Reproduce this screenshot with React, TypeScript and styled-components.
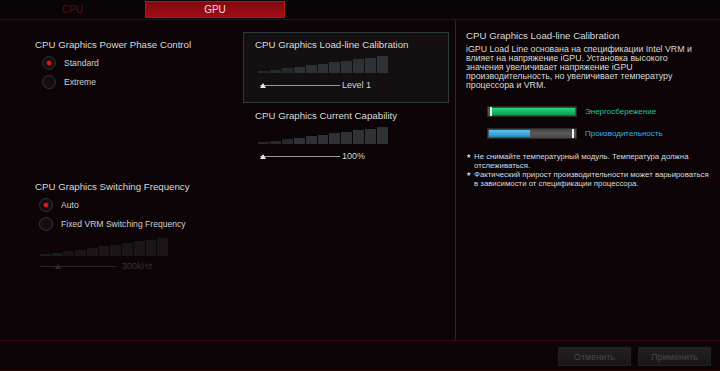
import React from "react";
import styled, { createGlobalStyle, css } from "styled-components";

const Global = createGlobalStyle`
  html, body { margin: 0; padding: 0; background: #0c0406; }
  * { box-sizing: border-box; }
  body { font-family: "Liberation Sans", Arial, sans-serif; }
`;

const Page = styled.div`
  width: 720px;
  height: 371px;
  display: flex;
  flex-direction: column;
  background: #0c0406;
  overflow: hidden;
`;

const TabBar = styled.div`
  height: 20px;
  display: flex;
  align-items: flex-start;
  background: #090506;
  border-bottom: 1px solid #3c080c;
`;

const Tab = styled.div<{ $active?: boolean; $w: number }>`
  width: ${(p) => p.$w}px;
  height: 17px;
  margin-top: 1px;
  display: flex;
  align-items: center;
  justify-content: center;
  font-size: 10px;
  color: #5c0d11;
  ${(p) =>
    p.$active &&
    css`
      color: #f2dcdc;
      background: linear-gradient(#7e0a0f, #a50d15);
      box-shadow: inset 0 0 0 1px #b8121a;
    `}
`;

const Main = styled.div`
  height: 321px;
  display: flex;
  border-bottom: 1px solid #3c080c;
`;

const LeftArea = styled.div`
  width: 455px;
  display: flex;
  padding-left: 35px;
`;

const Column = styled.div<{ $w: number; $top: number }>`
  width: ${(p) => p.$w}px;
  padding-top: ${(p) => p.$top}px;
  display: flex;
  flex-direction: column;
`;

const Title = styled.div`
  font-size: 9.7px;
  line-height: 12px;
  color: #dadada;
  white-space: nowrap;
`;

const Section = styled.div<{ $mt?: number }>`
  margin-top: ${(p) => p.$mt ?? 0}px;
  display: flex;
  flex-direction: column;
`;

const Options = styled.div<{ $indent: number }>`
  margin-top: 2px;
  padding-left: ${(p) => p.$indent}px;
  display: flex;
  flex-direction: column;
`;

const OptionRow = styled.div`
  height: 19px;
  display: flex;
  align-items: center;
  gap: 8px;
  font-size: 8.6px;
  color: #d2d2d2;
`;

const Radio = styled.span<{ $checked?: boolean }>`
  width: 14px;
  height: 14px;
  border-radius: 50%;
  border: 1.5px solid #343031;
  background: radial-gradient(circle, #140e0f 55%, #1f1a1b 100%);
  display: flex;
  align-items: center;
  justify-content: center;
  flex-shrink: 0;
  &::after {
    content: "";
    width: 4px;
    height: 4px;
    border-radius: 50%;
    background: ${(p) => (p.$checked ? "#ee1620" : "transparent")};
    box-shadow: ${(p) => (p.$checked ? "0 0 2px #ff2a2a" : "none")};
  }
`;

const Stairs = styled.div<{ $w: number; $h: number; $ml: number; $mt: number }>`
  width: ${(p) => p.$w}px;
  height: ${(p) => p.$h}px;
  margin-left: ${(p) => p.$ml}px;
  margin-top: ${(p) => p.$mt}px;
  display: flex;
  align-items: flex-end;
  gap: 1px;
`;

const Step = styled.div<{ $h: number; $tone: string }>`
  flex: 1;
  height: ${(p) => p.$h}px;
  background: ${(p) => p.$tone};
`;

const SliderRow = styled.div<{ $ml: number; $mt: number }>`
  height: 10px;
  margin-top: ${(p) => p.$mt}px;
  margin-left: ${(p) => p.$ml}px;
  display: flex;
  align-items: center;
`;

const Track = styled.div<{ $w: number; $faded?: boolean }>`
  position: relative;
  width: ${(p) => p.$w}px;
  height: 1px;
  background: ${(p) => (p.$faded ? "#2a2728" : "#9a9a9a")};
`;

const Thumb = styled.span<{ $x: number; $faded?: boolean }>`
  position: absolute;
  left: ${(p) => p.$x}px;
  top: -2px;
  width: 0;
  height: 0;
  border-left: 3.5px solid transparent;
  border-right: 3.5px solid transparent;
  border-bottom: 5px solid ${(p) => (p.$faded ? "#2e2c2d" : "#e8e8e8")};
`;

const SliderValue = styled.span<{ $faded?: boolean }>`
  margin-left: ${(p) => (p.$faded ? 6 : 2)}px;
  font-size: 9px;
  color: ${(p) => (p.$faded ? "#383435" : "#d4d4d4")};
`;

const Block = styled.div<{ $selected?: boolean }>`
  padding: 6px 11px 12px 11px;
  border: 1px solid ${(p) => (p.$selected ? "#2f3a3b" : "transparent")};
  background: ${(p) => (p.$selected ? "#141012" : "transparent")};
  display: flex;
  flex-direction: column;
`;

const RightPanel = styled.div`
  flex: 1;
  border-left: 1px solid #2b2728;
  padding: 10px 8px 0 10px;
  display: flex;
  flex-direction: column;
`;

const Desc = styled.div`
  margin-top: 3px;
  font-size: 8.8px;
  line-height: 9.1px;
  color: #dadada;
  white-space: nowrap;
`;

const Meters = styled.div`
  margin-top: 16px;
  margin-left: 21px;
  display: flex;
  flex-direction: column;
  gap: 11px;
`;

const MeterRow = styled.div`
  display: flex;
  align-items: center;
  gap: 8px;
  height: 11px;
`;

const Meter = styled.div`
  position: relative;
  width: 90px;
  height: 11px;
  border-radius: 1px;
  background: linear-gradient(#3d3d3d, #5a5a5a 50%, #434343);
  box-shadow: inset 0 0 0 1px #2a2a2a;
`;

const Fill = styled.div<{ $from: number; $to: number; $kind: "green" | "blue" }>`
  position: absolute;
  top: 2px;
  bottom: 2px;
  left: ${(p) => p.$from}px;
  width: ${(p) => p.$to - p.$from}px;
  background: ${(p) =>
    p.$kind === "green"
      ? "linear-gradient(#2bd67e, #16b45e 60%, #129a50)"
      : "linear-gradient(#5cc4ef, #3aa4d8 60%, #2a88bb)"};
`;

const Marker = styled.div<{ $x: number }>`
  position: absolute;
  top: 1px;
  bottom: 1px;
  left: ${(p) => p.$x}px;
  width: 2px;
  background: #f4f4f4;
`;

const MeterLabel = styled.span<{ $color: string }>`
  font-size: 8px;
  color: ${(p) => p.$color};
  white-space: nowrap;
`;

const Notes = styled.div`
  margin-top: 13px;
  display: flex;
  flex-direction: column;
`;

const Note = styled.div`
  display: flex;
  gap: 2px;
  font-size: 7.8px;
  line-height: 9px;
  color: #dcdcdc;
`;

const Star = styled.span`
  width: 6px;
  font-size: 6px;
  color: #d8d8d8;
  flex-shrink: 0;
`;

const Footer = styled.div`
  height: 30px;
  display: flex;
  justify-content: flex-end;
  align-items: flex-start;
  padding: 6px 9px 0 0;
  gap: 7px;
  border-bottom: 1px solid #2a0608;
`;

const Button = styled.button`
  width: 73px;
  height: 19px;
  border: 1px solid #221f20;
  background: linear-gradient(#222021, #1a1718);
  color: #4b4849;
  font-family: "Liberation Sans", Arial, sans-serif;
  font-size: 9px;
  padding: 0;
`;

type StairProps = { w: number; h: number; ml: number; mt: number; faded?: boolean };

function Staircase({ w, h, ml, mt, faded }: StairProps) {
  const n = 11;
  const steps = Array.from({ length: n }, (_, i) => {
    const height = Math.round(1.5 + ((h - 1.5) * i) / (n - 1));
    let tone = "#2e3236";
    if (faded) tone = i < 2 ? "#141f24" : "#1a1617";
    else if (i < 3) tone = "#25292d";
    return { height, tone };
  });
  return (
    <Stairs $w={w} $h={h} $ml={ml} $mt={mt}>
      {steps.map((s, i) => (
        <Step key={i} $h={s.height} $tone={s.tone} />
      ))}
    </Stairs>
  );
}

function SliderBlock({ title, value, selected }: { title: string; value: string; selected?: boolean }) {
  return (
    <Block $selected={selected}>
      <Title>{title}</Title>
      <Staircase w={130} h={17} ml={3} mt={5} />
      <SliderRow $ml={5} $mt={7}>
        <Track $w={80}>
          <Thumb $x={0} />
        </Track>
        <SliderValue>{value}</SliderValue>
      </SliderRow>
    </Block>
  );
}

export default function App() {
  return (
    <Page>
      <Global />
      <TabBar>
        <Tab $w={145}>CPU</Tab>
        <Tab $w={140} $active>
          GPU
        </Tab>
      </TabBar>
      <Main>
        <LeftArea>
          <Column $w={208} $top={19}>
            <Section>
              <Title>CPU Graphics Power Phase Control</Title>
              <Options $indent={7}>
                <OptionRow>
                  <Radio $checked />
                  Standard
                </OptionRow>
                <OptionRow>
                  <Radio />
                  Extreme
                </OptionRow>
              </Options>
            </Section>
            <Section $mt={90}>
              <Title>CPU Graphics Switching Frequency</Title>
              <Options $indent={4}>
                <OptionRow>
                  <Radio $checked />
                  Auto
                </OptionRow>
                <OptionRow>
                  <Radio />
                  Fixed VRM Switching Frequency
                </OptionRow>
              </Options>
              <Staircase w={128} h={18} ml={5} mt={5} faded />
              <SliderRow $ml={5} $mt={5}>
                <Track $w={76} $faded>
                  <Thumb $x={15} $faded />
                </Track>
                <SliderValue $faded>300kHz</SliderValue>
              </SliderRow>
            </Section>
          </Column>
          <Column $w={206} $top={12}>
            <SliderBlock title="CPU Graphics Load-line Calibration" value="Level 1" selected />
            <SliderBlock title="CPU Graphics Current Capability" value="100%" />
          </Column>
        </LeftArea>
        <RightPanel>
          <Title>CPU Graphics Load-line Calibration</Title>
          <Desc>
            iGPU Load Line основана на спецификации Intel VRM и
            <br />
            влияет на напряжение iGPU. Установка высокого
            <br />
            значения увеличивает напряжение iGPU
            <br />
            производительность, но увеличивает температуру
            <br />
            процессора и VRM.
          </Desc>
          <Meters>
            <MeterRow>
              <Meter>
                <Fill $from={4} $to={88} $kind="green" />
                <Marker $x={3} />
              </Meter>
              <MeterLabel $color="#1ec79c">Энергосбережение</MeterLabel>
            </MeterRow>
            <MeterRow>
              <Meter>
                <Fill $from={2} $to={43} $kind="blue" />
                <Marker $x={85} />
              </Meter>
              <MeterLabel $color="#38b2e6">Производительность</MeterLabel>
            </MeterRow>
          </Meters>
          <Notes>
            <Note>
              <Star>★</Star>
              <span>
                Не снимайте температурный модуль. Температура должна
                <br />
                отслеживаться.
              </span>
            </Note>
            <Note>
              <Star>★</Star>
              <span>
                Фактический прирост производительности может варьироваться
                <br />
                в зависимости от спецификации процессора.
              </span>
            </Note>
          </Notes>
        </RightPanel>
      </Main>
      <Footer>
        <Button>Отменить</Button>
        <Button>Применить</Button>
      </Footer>
    </Page>
  );
}
